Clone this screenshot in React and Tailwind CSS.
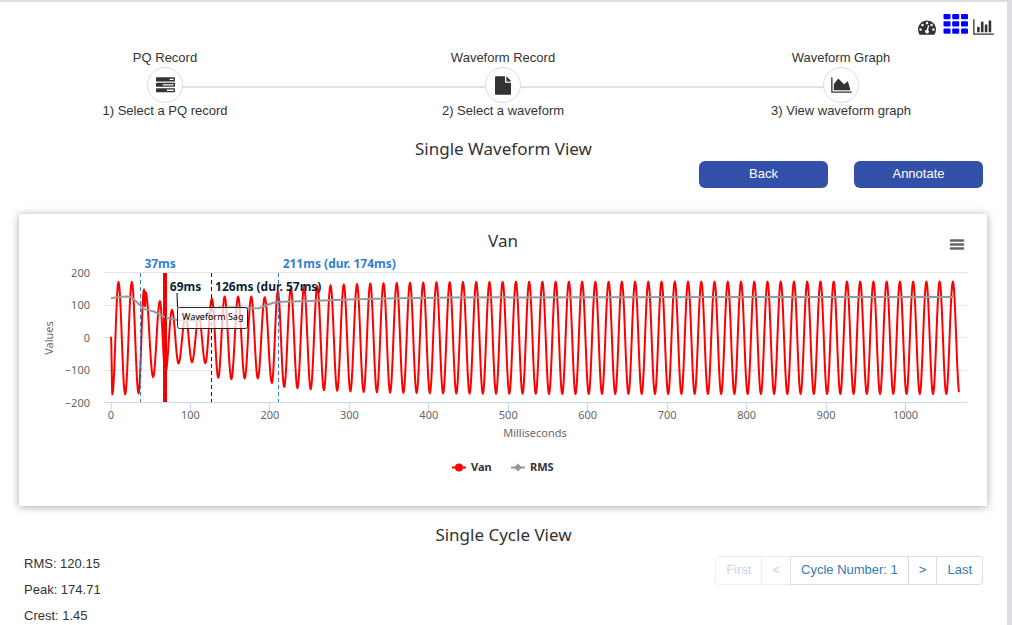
import React from "react";

const FA = {
  dashboard:
    "M384 1152q0-53-37.5-90.5t-90.5-37.5-90.5 37.5-37.5 90.5 37.5 90.5 90.5 37.5 90.5-37.5 37.5-90.5zm192-448q0-53-37.5-90.5t-90.5-37.5-90.5 37.5-37.5 90.5 37.5 90.5 90.5 37.5 90.5-37.5 37.5-90.5zm428 481l101-382q6-26-7.5-48.5t-38.5-29.5-48 6.5-30 39.5l-101 382q-60 5-107 43.5t-63 98.5q-20 77 20 146t117 89 146-20 89-117q16-60-6-117t-72-91zm660-33q0-53-37.5-90.5t-90.5-37.5-90.5 37.5-37.5 90.5 37.5 90.5 90.5 37.5 90.5-37.5 37.5-90.5zm-640-640q0-53-37.5-90.5t-90.5-37.5-90.5 37.5-37.5 90.5 37.5 90.5 90.5 37.5 90.5-37.5 37.5-90.5zm448 192q0-53-37.5-90.5t-90.5-37.5-90.5 37.5-37.5 90.5 37.5 90.5 90.5 37.5 90.5-37.5 37.5-90.5zm320 448q0 261-141 483-19 29-54 29h-1402q-35 0-54-29-141-221-141-483 0-182 71-348t191-286 286-191 348-71 348 71 286 191 191 286 71 348z",
  bars:
    "M640 896v512h-256v-512h256zm384-512v1024h-256v-1024h256zm1024 1152v128h-2048v-1536h128v1408h1920zm-640-896v768h-256v-768h256zm384-384v1152h-256v-1152h256z",
  area: "M2048 1536v128h-2048v-1536h128v1408h1920zm-384-1024l256 896h-1664v-576l448-576 576 576z",
  file: "M960 0v544q0 40 28 68t68 28h480v1056q0 40-28 68t-68 28H96q-40 0-68-28T0 1696V96q0-40 28-68T96 0zm128 8q22 14 36 28l376 376q14 14 28 56v44h-440z",
  tasks:
    "M1024 1408h640v-128h-640v128zm-384-512h1024v-128h-1024v128zm640-512h384v-128h-384v128zm512 832v256q0 26-19 45t-45 19h-1664q-26 0-45-19t-19-45v-256q0-26 19-45t45-19h1664q26 0 45 19t19 45zm0-512v256q0 26-19 45t-45 19h-1664q-26 0-45-19t-19-45v-256q0-26 19-45t45-19h1664q26 0 45 19t19 45zm0-512v256q0 26-19 45t-45 19h-1664q-26 0-45-19t-19-45v-256q0-26 19-45t45-19h1664q26 0 45 19t19 45z",
};

function Icon({ path, box, className }) {
  return (
    <svg viewBox={box} className={className} fill="currentColor" aria-hidden="true">
      <path d={path} />
    </svg>
  );
}

const steps = [
  { title: "PQ Record", text: "1) Select a PQ record", icon: <Icon path={FA.tasks} box="0 0 1792 1792" className="h-[19px] w-[19px]" /> },
  { title: "Waveform Record", text: "2) Select a waveform", icon: <Icon path={FA.file} box="0 0 1536 1792" className="h-[19px] w-[16px]" /> },
  { title: "Waveform Graph", text: "3) View waveform graph", icon: <Icon path={FA.area} box="0 0 2048 1792" className="h-[18px] w-[21px]" /> },
];

function Steps() {
  return (
    <div className="relative pt-3">
      <div className="absolute inset-x-[165px] top-[48px] h-[2px] bg-[#e0e0e0]" />
      <ol className="relative flex justify-between pl-24 pr-[97px]">
        {steps.map((s) => (
          <li key={s.title} className="flex w-[138px] flex-col items-center whitespace-nowrap leading-4">
            <span>{s.title}</span>
            <span className="mt-px flex h-9 w-9 items-center justify-center rounded-full border border-[#dcdcdc] bg-white">
              {s.icon}
            </span>
            <span>{s.text}</span>
          </li>
        ))}
      </ol>
    </div>
  );
}

/* Chart scales */
const X = (ms) => 92 + ms * 0.7945;
const Y = (v) => 123.5 - v * 0.325;

/* Local extremes of the sampled voltage: [ms, value] */
const extremes = [
  [1.7, -175], [9.4, 171], [17.8, -175], [26.2, 171], [34.7, -172],
  [41.5, 148], [42.6, 96], [43.6, 140], [53, -122], [61.5, 112], [68.5, -110], [76.8, 85],
  [85, -80], [93.8, 68], [102, -76], [110.5, 66], [118.8, -79], [127, 120],
  [135, -124], [143, 126], [151.5, -128], [160, 126], [168.3, -126], [176.5, 126],
  [184.8, -126], [193.5, 124], [202.5, -140], [210, 142],
];
for (let i = 0; i < 103; i++) {
  const t = 218 + i * 8.333;
  const amp = 172 - 22 * Math.exp(-i / 10);
  extremes.push([t, i % 2 ? amp : -amp - 2]);
}

function wavePath() {
  let d = `M${X(0)} ${Y(0)}`;
  let [t0, v0] = [0, 0];
  for (const [t1, v1] of extremes) {
    for (let k = 1; k <= 10; k++) {
      const f = k / 10;
      const t = t0 + (t1 - t0) * f;
      if (t > 1067.2) return d;
      const v = v0 + ((v1 - v0) * (1 - Math.cos(Math.PI * f))) / 2;
      d += `L${X(t).toFixed(2)} ${Y(v).toFixed(2)}`;
    }
    [t0, v0] = [t1, v1];
  }
  return d;
}

const rms = [
  [0, 121], [10, 125], [20, 126], [26, 123], [33, 108], [41, 88], [54, 80], [68, 62], [85, 53], [108, 51],
  [118, 62], [126, 86], [135, 92], [160, 92], [178, 90], [186, 90], [196, 99], [204, 107], [215, 110],
  [250, 112], [300, 117], [360, 121], [430, 123], [600, 124], [800, 125], [1060, 125],
];

const bands = [
  { ms: 37, color: "#2f7ed8", label: "37ms", y: 54 },
  { ms: 69, color: "#0d233a", label: "69ms", y: 77 },
  { ms: 126, color: "#0d233a", label: "126ms (dur. 57ms)", y: 77 },
  { ms: 211, color: "#2f7ed8", label: "211ms (dur. 174ms)", y: 54 },
];

function Chart() {
  return (
    <svg
      viewBox="0 0 968 292"
      className="block w-full font-['Noto_Sans','Open_Sans',sans-serif] text-[11px]"
      role="img"
      aria-label="Van waveform chart"
    >
      <text x="484" y="33" textAnchor="middle" className="fill-[#333333] text-[17px]">Van</text>

      <path d="M932 26.5h12M932 30.5h12M932 34.5h12" stroke="#666666" strokeWidth="2.6" strokeLinecap="round" />

      {[200, 100, 0, -100].map((v) => (
        <path key={v} d={`M85 ${Math.floor(Y(v)) + 0.5}H948`} stroke="#e6e6e6" />
      ))}
      <path d="M85 188.5H948" stroke="#ccd6eb" />
      {[0, 100, 200, 300, 400, 500, 600, 700, 800, 900, 1000].map((t) => (
        <g key={t}>
          <path d={`M${Math.floor(X(t)) + 0.5} 189v9`} stroke="#ccd6eb" />
          <text x={X(t)} y="205" textAnchor="middle" className="fill-[#666666]">{t}</text>
        </g>
      ))}
      {[200, 100, 0, -100, -200].map((v) => (
        <text key={v} x="71" y={Y(v) + 4} textAnchor="end" className="fill-[#666666]">
          {v < 0 ? `\u2212${-v}` : v}
        </text>
      ))}
      <text transform="translate(34 124) rotate(-90)" textAnchor="middle" className="fill-[#666666]">Values</text>
      <text x="516" y="223" textAnchor="middle" className="fill-[#666666]">Milliseconds</text>

      <path d="M146 59V188" stroke="#ff0000" strokeWidth="4" />
      <path d={wavePath()} fill="none" stroke="#ff0000" strokeWidth="2" strokeLinejoin="round" strokeLinecap="round" />
      <path
        d={"M" + rms.map(([t, v]) => `${X(t).toFixed(1)} ${Y(v).toFixed(1)}`).join("L")}
        fill="none"
        stroke="#999999"
        strokeWidth="2"
        strokeLinejoin="round"
      />

      {bands.map((b) => (
        <g key={b.label}>
          <path d={`M${Math.floor(X(b.ms)) + 0.5} 59V188`} stroke={b.color} strokeDasharray="4 3" />
          <text x={X(b.ms) + 4} y={b.y} fill={b.color} className="text-[12px] font-bold">{b.label}</text>
        </g>
      ))}

      <rect x="158.5" y="93.5" width="70" height="21" rx="2" fill="#ffffff" fillOpacity="0.75" stroke="#222222" />
      <path d="M158.5 93.5L158 79" stroke="#000000" />
      <text x="163" y="106" className="fill-black text-[9px]">Waveform Sag</text>

      <path d="M433 253.5h14" stroke="#ff0000" strokeWidth="2" />
      <circle cx="440" cy="253.5" r="4" fill="#ff0000" />
      <text x="452" y="257" className="fill-[#333333] font-bold">Van</text>
      <path d="M492 253.5h14" stroke="#999999" strokeWidth="2" />
      <path d="M499 249.5l4 4-4 4-4-4z" fill="#999999" />
      <text x="511" y="257" className="fill-[#333333] font-bold">RMS</text>
    </svg>
  );
}

const pageBtn = "-ml-px border border-[#dddddd] px-[10px] pb-[2px] text-[#337ab7] disabled:border-[#eeeeee] disabled:text-[#c5d9ea]";
const actionBtn = "h-[27px] w-[129px] rounded-md bg-[#3250a8] pb-[2px] text-white";
const heading = "text-center font-['Noto_Sans','Open_Sans',sans-serif] text-[17px] leading-6";

export default function App() {
  return (
    <div className="min-h-screen overflow-hidden bg-[#dfdde3] pr-[5px] pt-[2px] font-['Liberation_Sans',Arial,sans-serif] text-[13px] text-[#333333]">
      <main className="min-h-screen bg-white pt-3">
        <nav className="flex h-6 items-start justify-end gap-1 pr-[13px]">
          <button type="button" aria-label="Dashboard" className="pt-1">
            <Icon path={FA.dashboard} box="0 0 1792 1792" className="h-[18px] w-[18px]" />
          </button>
          <button type="button" aria-label="Grid" className="ml-[3px] text-[#0000ff]">
            <svg viewBox="0 0 26 20" className="h-5 w-[26px]" fill="currentColor" aria-hidden="true">
              {[0, 7.2, 14.5].map((y) =>
                [0.5, 9.2, 18].map((x) => <rect key={`${x}-${y}`} x={x} y={y} width="7" height="5.3" rx="1" />)
              )}
            </svg>
          </button>
          <button type="button" aria-label="Charts" className="pt-1">
            <Icon path={FA.bars} box="0 0 2048 1792" className="h-[18px] w-[21px]" />
          </button>
        </nav>

        <Steps />

        <section>
          <h2 className={`mt-[18px] ${heading}`}>Single Waveform View</h2>
          <div className="flex justify-end gap-[26px] pr-6">
            <button type="button" className={actionBtn}>Back</button>
            <button type="button" className={actionBtn}>Annotate</button>
          </div>
          <div className="ml-[19px] mr-5 mt-[26px] bg-white shadow-[0_1px_8px_rgba(0,0,0,0.35)]">
            <Chart />
          </div>
        </section>

        <section>
          <h2 className={`mt-[17px] ${heading}`}>Single Cycle View</h2>
          <div className="flex items-start justify-between px-6">
            <div className="pt-1 leading-[26px]">
              <p>RMS: 120.15</p>
              <p>Peak: 174.71</p>
              <p>Crest: 1.45</p>
            </div>
            <div className="mt-[9px] flex h-[29px]">
              <button type="button" disabled className={`rounded-l ${pageBtn}`}>First</button>
              <button type="button" disabled className={pageBtn}>&lt;</button>
              <button type="button" className={pageBtn}>Cycle Number: 1</button>
              <button type="button" className={pageBtn}>&gt;</button>
              <button type="button" className={`rounded-r ${pageBtn}`}>Last</button>
            </div>
          </div>
        </section>
      </main>
    </div>
  );
}
